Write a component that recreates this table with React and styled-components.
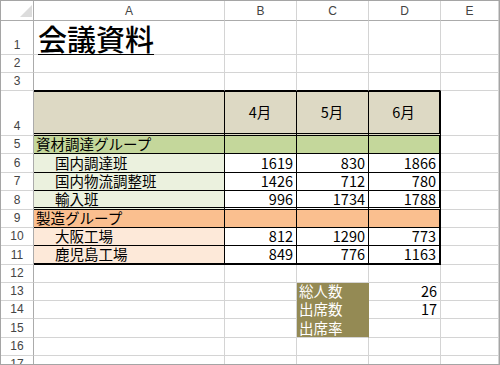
import styled, { createGlobalStyle } from "styled-components";

const GlobalStyle = createGlobalStyle`
  html, body {
    margin: 0;
    padding: 0;
    background: #fff;
    overflow: hidden;
  }
`;

const GRID = "#d4d4d4";
const HEAD_LINE = "#ababab";
const BLACK = "1px solid #000";
const THICK = "2px solid #000";
const DOUBLE = "3px double #000";

const TAN = "#ddd9c4";
const GREEN = "#c4d79b";
const LIGHT_GREEN = "#ebf1de";
const ORANGE = "#fabf8f";
const LIGHT_ORANGE = "#fde9d9";
const OLIVE = "#948a54";

// row heights incl. their bottom line, rows 1..17
const rowHeights = [34, 18, 18, 45, 18, 19, 18, 19, 18, 18, 19, 18, 18, 18, 19, 18, 18];

const table = {
  4: { fill: TAN, a: "", values: ["4月", "5月", "6月"], head: true, top: BLACK, bottom: DOUBLE },
  5: { fill: GREEN, a: "資材調達グループ", values: ["", "", ""] },
  6: { fill: LIGHT_GREEN, a: "国内調達班", indent: true, values: [1619, 830, 1866] },
  7: { fill: LIGHT_GREEN, a: "国内物流調整班", indent: true, values: [1426, 712, 780] },
  8: { fill: LIGHT_GREEN, a: "輸入班", indent: true, values: [996, 1734, 1788], bottom: DOUBLE },
  9: { fill: ORANGE, a: "製造グループ", values: ["", "", ""] },
  10: { fill: LIGHT_ORANGE, a: "大阪工場", indent: true, values: [812, 1290, 773] },
  11: { fill: LIGHT_ORANGE, a: "鹿児島工場", indent: true, values: [849, 776, 1163], bottom: THICK },
};

const summary = {
  13: { label: "総人数", value: 26 },
  14: { label: "出席数", value: 17 },
  15: { label: "出席率", value: "" },
};

const Frame = styled.div`
  box-sizing: border-box;
  width: 500px;
  height: 365px;
  border: 1px solid #a5a5a5;
  overflow: hidden;
  background: #fff;
`;

const Sheet = styled.div`
  display: grid;
  grid-template-columns: 33px 191px 72px 72px 72px 1fr;
  grid-template-rows: 20px ${rowHeights.map((h) => `${h}px`).join(" ")};
`;

const Corner = styled.div`
  box-sizing: border-box;
  display: flex;
  align-items: flex-end;
  justify-content: flex-end;
  padding: 0 1px 3px 0;
  border-right: 1px solid ${HEAD_LINE};
  border-bottom: 1px solid ${HEAD_LINE};
`;

const ColHead = styled.div`
  box-sizing: border-box;
  display: flex;
  align-items: center;
  justify-content: center;
  border-right: 1px solid ${GRID};
  border-bottom: 1px solid ${HEAD_LINE};
  font-family: "Liberation Sans", Arial, sans-serif;
  font-size: 12px;
  color: #444;
`;

const RowHead = styled.div`
  box-sizing: border-box;
  display: flex;
  align-items: flex-end;
  justify-content: center;
  padding-bottom: 3px;
  border-right: 1px solid ${HEAD_LINE};
  border-bottom: ${(p) => (p.$thick ? "2px" : "1px")} solid ${GRID};
  font-family: "Liberation Sans", Arial, sans-serif;
  font-size: 12px;
  line-height: 1;
  color: #444;
`;

const Cell = styled.div`
  box-sizing: border-box;
  display: flex;
  align-items: ${(p) => p.$valign || "center"};
  justify-content: ${(p) => p.$justify || "flex-start"};
  padding: 0 3px 0 ${(p) => (p.$indent ? 21 : 2)}px;
  background: ${(p) => p.$bg || "#fff"};
  color: ${(p) => p.$color || "#000"};
  border-top: ${(p) => p.$top || "none"};
  border-right: ${(p) => p.$right || `1px solid ${GRID}`};
  border-bottom: ${(p) => p.$bottom || `1px solid ${GRID}`};
  font-family: "Noto Sans CJK JP", sans-serif;
  font-size: 14.5px;
  line-height: 1;
  white-space: nowrap;
`;

const Title = styled.span`
  font-family: "Noto Sans CJK JP", serif;
  font-size: 29px;
  font-weight: 500;
  line-height: 1;
  padding: 0 0 1px 2px;
  text-decoration: underline;
  text-decoration-thickness: 1px;
  text-underline-offset: 3px;
`;

const SelectAll = () => (
  <svg width="12" height="12" viewBox="0 0 12 12">
    <polygon points="12,0 12,12 0,12" fill="#dcdcdc" />
  </svg>
);

function rowCells(n) {
  const t = table[n];
  if (t) {
    const bottom = t.bottom || BLACK;
    const a = { $bg: t.fill, $top: t.top, $bottom: bottom, $right: BLACK, $indent: t.indent, content: t.a };
    const rest = t.values.map((v, i) => ({
      $bg: t.head || typeof v !== "number" ? t.fill : "#fff",
      $top: t.top,
      $bottom: bottom,
      $right: i === 2 ? THICK : BLACK,
      $justify: t.head ? "center" : "flex-end",
      content: v,
    }));
    return [a, ...rest, {}];
  }
  if (n === 1) {
    return [{ $valign: "flex-end", content: <Title>会議資料</Title> }, {}, {}, {}, {}];
  }
  if (n === 3) {
    return [{ $bottom: BLACK }, { $bottom: BLACK }, { $bottom: BLACK }, { $bottom: BLACK }, {}];
  }
  const s = summary[n];
  if (s) {
    return [
      {},
      {},
      {
        $bg: OLIVE,
        $color: "#fff",
        $right: `1px solid ${OLIVE}`,
        $bottom: n === 15 ? undefined : `1px solid ${OLIVE}`,
        content: s.label,
      },
      { $justify: "flex-end", content: s.value },
      {},
    ];
  }
  return [{}, {}, {}, {}, {}];
}

const App = () => {
  return (
    <Frame>
      <GlobalStyle />
      <Sheet>
        <Corner>
          <SelectAll />
        </Corner>
        {["A", "B", "C", "D", "E"].map((c) => (
          <ColHead key={c}>{c}</ColHead>
        ))}
        {rowHeights.map((_, i) => {
          const n = i + 1;
          return [
            <RowHead key={`h${n}`}>{n}</RowHead>,
            ...rowCells(n).map(({ content, ...p }, j) => (
              <Cell key={`${n}-${j}`} {...p}>
                {content}
              </Cell>
            )),
          ];
        })}
      </Sheet>
    </Frame>
  );
};

export default App;
